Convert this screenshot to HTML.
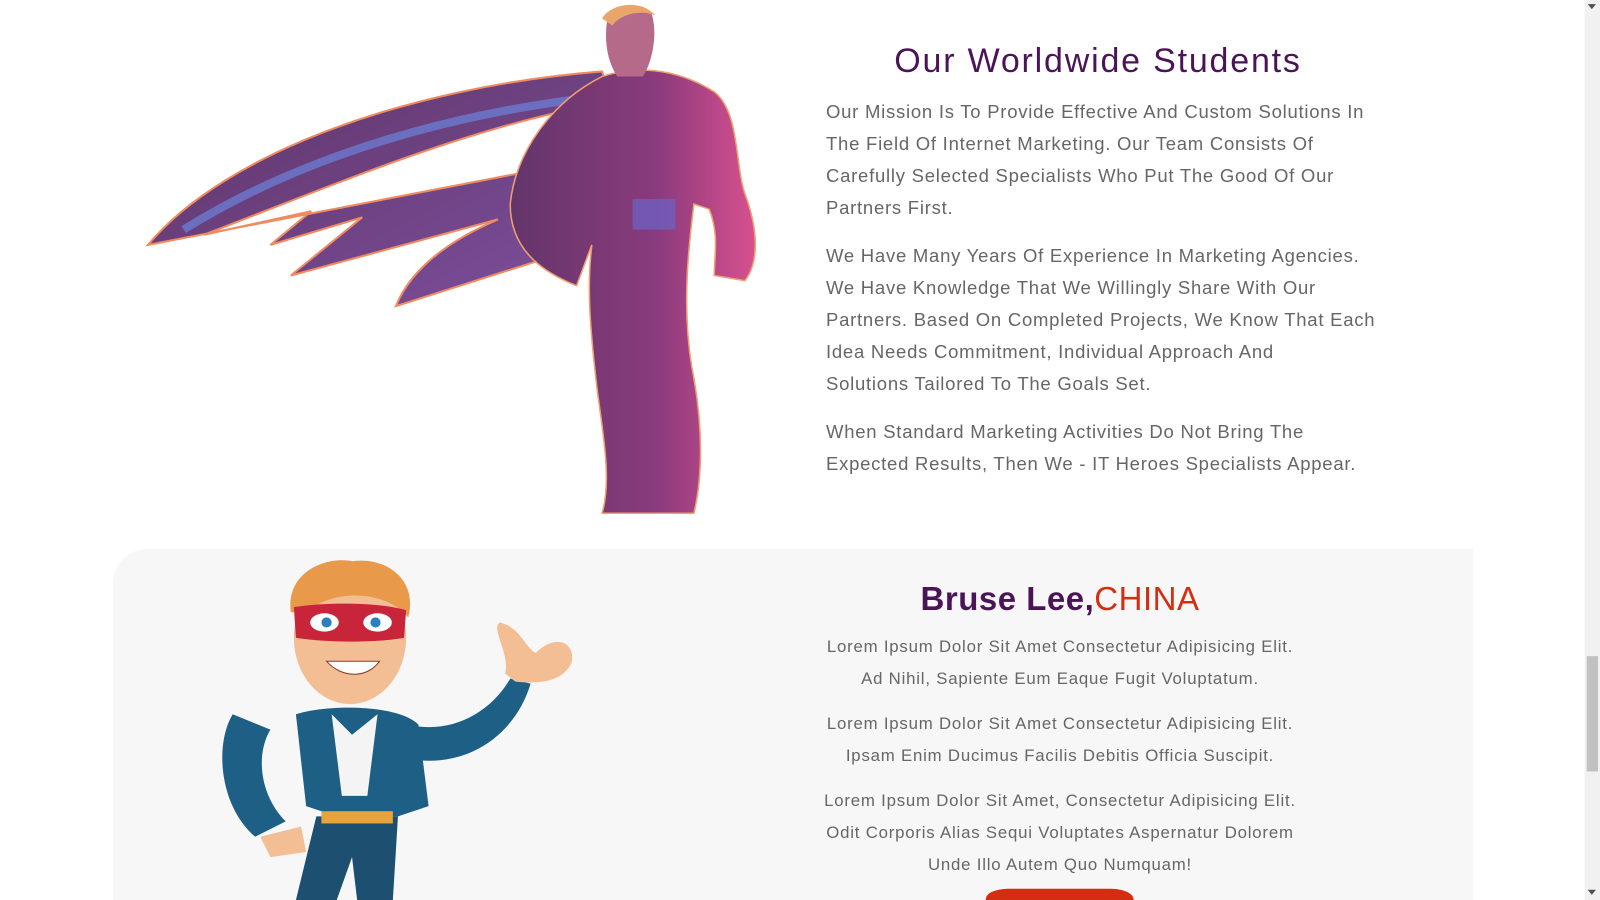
<!DOCTYPE html>
<html><head><meta charset="utf-8"><style>
html,body{margin:0;padding:0;width:1600px;height:900px;overflow:hidden;background:#fff;font-family:"Liberation Sans",sans-serif}
.abs{position:absolute}
h2{margin:0;font-weight:500}
.p1{position:absolute;left:826px;top:96px;width:600px;color:#666;font-size:18.5px;line-height:32px;letter-spacing:0.75px}
.p1 p{margin:0 0 16px}
.box{position:absolute;left:113px;top:549px;width:1360px;height:351px;background:#f7f7f7;border-top-left-radius:34px}
.p2{position:absolute;left:710px;width:700px;text-align:center;color:#666;font-size:16.8px;line-height:32px;letter-spacing:0.8px}
.p2 p{margin:0 0 13px}
</style></head><body>
<div class="box"></div>
<svg class="abs" style="left:0;top:0" width="1600" height="900" viewBox="0 0 1568 882">
<defs>
<linearGradient id="cape" x1="0" y1="0" x2="1" y2="1"><stop offset="0" stop-color="#5e3566"/><stop offset="1" stop-color="#7d4f9e"/></linearGradient>
<linearGradient id="body" x1="0" y1="0" x2="1" y2="0"><stop offset="0" stop-color="#63356a"/><stop offset=".6" stop-color="#8a3b7c"/><stop offset="1" stop-color="#d8508f"/></linearGradient>
</defs>
<path d="M145,240 C220,150 400,85 590,70 L600,100 C470,120 330,180 200,230 L305,207 L265,240 L355,213 L285,270 L488,215 C430,240 400,270 388,300 L545,250 L560,160 Z" fill="url(#cape)" stroke="#f08a60" stroke-width="2"/>
<path d="M180,225 C300,150 450,110 585,95" stroke="#6b7ad0" stroke-width="8" fill="none" opacity=".8"/>
<path d="M590,75 C620,65 660,65 700,90 C725,110 720,160 730,190 C745,230 742,260 730,275 L700,270 C700,250 705,230 695,205 L680,200 C675,240 668,300 678,360 C690,420 688,470 680,503 L590,503 C600,470 590,420 585,380 C578,320 575,280 580,240 L565,280 C540,270 500,250 500,200 C505,150 540,100 590,75 Z" fill="url(#body)" stroke="#f0a070" stroke-width="1.5"/>
<rect x="620" y="195" width="42" height="30" fill="#6b64c8" opacity=".7"/>
<path d="M595,20 C595,5 625,0 638,12 C645,30 640,60 630,75 L605,75 C595,60 592,40 595,20 Z" fill="#b56a8a"/>
<path d="M590,18 C600,2 630,0 642,15 C630,10 610,12 600,25 Z" fill="#e9a56a"/>
<path d="M290,700 C320,690 390,690 410,710 L420,790 L390,800 L330,800 L300,790 Z" fill="#1e5f85"/>
<path d="M325,700 L345,720 L370,700 L360,780 L335,780 Z" fill="#f4f4f4"/>
<path d="M228,700 C210,730 215,790 250,820 L280,805 C255,780 250,740 265,715 Z" fill="#1e5f85"/>
<path d="M255,820 L295,810 L300,835 L265,840 Z" fill="#f3be94"/>
<path d="M400,710 C440,720 480,700 500,665 L520,670 C505,720 460,750 410,745 Z" fill="#1e5f85"/>
<path d="M495,660 C500,640 480,615 490,610 C510,615 515,635 525,640 C545,620 565,630 560,650 C550,670 525,670 505,668 Z" fill="#f3be94"/>
<path d="M310,800 L390,800 L385,882 L350,882 L345,840 L330,882 L290,882 Z" fill="#1d4f70"/>
<rect x="315" y="795" width="70" height="12" fill="#e8a43a"/>
<ellipse cx="343" cy="625" rx="55" ry="65" fill="#f3be94"/>
<path d="M285,600 C280,560 320,545 345,550 C380,545 410,570 400,605 C380,580 330,575 300,600 Z" fill="#e89a4a"/>
<path d="M288,595 C320,590 370,590 398,598 L396,625 C370,630 320,630 290,625 Z" fill="#c8243a"/>
<ellipse cx="318" cy="610" rx="14" ry="9" fill="#fff"/><ellipse cx="370" cy="610" rx="14" ry="9" fill="#fff"/>
<circle cx="320" cy="610" r="5" fill="#2a7fc0"/><circle cx="368" cy="610" r="5" fill="#2a7fc0"/>
<path d="M320,648 C335,665 360,665 372,648 Z" fill="#fff" stroke="#8a3a2a"/>
<path d="M966,882 C966,873 980,871 990,871 L1088,871 C1100,871 1111,875 1111,882 Z" fill="#d42e12"/>
<rect x="1553" y="0" width="15" height="882" fill="#f1f1f1"/>
<rect x="1555" y="643" width="11" height="113" fill="#c1c1c1"/>
<path d="M1556,4 L1564,4 L1560,9 Z" fill="#505050"/>
<path d="M1556,872 L1564,872 L1560,877 Z" fill="#505050"/>
</svg>
<h2 class="abs" style="left:700px;width:796px;text-align:center;top:42px;font-size:34px;letter-spacing:1.8px;color:#4b1458">Our Worldwide Students</h2>
<div class="p1">
<p>Our Mission Is To Provide Effective And Custom Solutions In<br>The Field Of Internet Marketing. Our Team Consists Of<br>Carefully Selected Specialists Who Put The Good Of Our<br>Partners First.</p>
<p>We Have Many Years Of Experience In Marketing Agencies.<br>We Have Knowledge That We Willingly Share With Our<br>Partners. Based On Completed Projects, We Know That Each<br>Idea Needs Commitment, Individual Approach And<br>Solutions Tailored To The Goals Set.</p>
<p>When Standard Marketing Activities Do Not Bring The<br>Expected Results, Then We - IT Heroes Specialists Appear.</p>
</div>
<h2 class="abs" style="left:710px;width:700px;text-align:center;top:580px;font-size:33px;letter-spacing:0.5px;font-weight:700;color:#4b1458">Bruse Lee,<span style="color:#d42e12;font-weight:500">CHINA</span></h2>
<div class="p2" style="top:631px">
<p>Lorem Ipsum Dolor Sit Amet Consectetur Adipisicing Elit.<br>Ad Nihil, Sapiente Eum Eaque Fugit Voluptatum.</p>
<p>Lorem Ipsum Dolor Sit Amet Consectetur Adipisicing Elit.<br>Ipsam Enim Ducimus Facilis Debitis Officia Suscipit.</p>
<p>Lorem Ipsum Dolor Sit Amet, Consectetur Adipisicing Elit.<br>Odit Corporis Alias Sequi Voluptates Aspernatur Dolorem<br>Unde Illo Autem Quo Numquam!</p>
</div>
</body></html>
